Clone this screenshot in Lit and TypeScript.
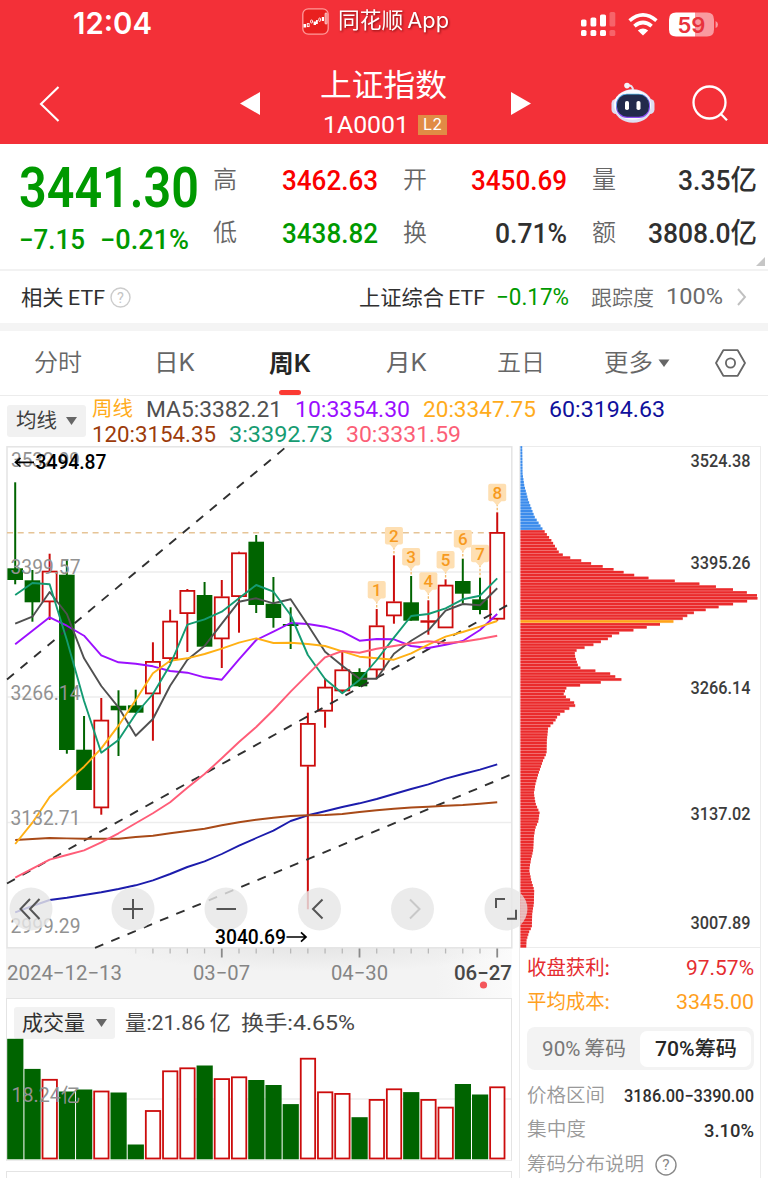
import { LitElement, html, svg, css } from "lit";
import { customElement } from "lit/decorators.js";

/* ---------- chart data (chart pixel space) ---------- */
const STEP = 17.215;
const cx = (i: number) => 15.2 + i * STEP;

// [rising, body top, body bottom, high, low]
const candles: [number, number, number, number, number][] = [
  [0, 568.3, 580, 482.3, 584.3], [0, 580.3, 602.3, 570, 621.7], [1, 571, 602, 553.7, 620],
  [0, 574.7, 750, 559, 753.7], [0, 749.7, 790, 716, 790], [1, 720, 808, 698, 814.7],
  [0, 705.7, 710.3, 690.3, 756], [0, 705.3, 712.7, 689.7, 712.7], [1, 661.3, 694, 642.3, 740.7],
  [1, 621, 658.7, 609.7, 663], [1, 590.3, 613.7, 589, 652], [0, 595, 646.7, 582, 646.7],
  [1, 596.7, 639, 580, 668], [1, 552.7, 596.7, 551.7, 632.7], [0, 541.7, 605, 535, 613],
  [0, 603.7, 618, 577, 627.7], [0, 624, 626, 607.3, 649], [1, 723.3, 766.3, 712.7, 909.3],
  [1, 687, 711.3, 678.3, 727.7], [1, 669.7, 691, 651.7, 692], [0, 672, 686.3, 668.3, 687],
  [1, 625.7, 670, 609, 678], [1, 601.7, 616, 555.3, 623.7], [0, 602.3, 620.7, 576, 620.7],
  [1, 620.6, 622, 600.3, 634.7], [1, 585, 628, 579.3, 628], [0, 581, 593.7, 558.7, 603],
  [0, 599.3, 610, 577.7, 614.3], [1, 532.3, 619.3, 512.3, 620.7],
];

const averages: [string, number[]][] = [
  ["navy", [912.3, 906, 900, 897.7, 895, 892.3, 889, 885.3, 880.3, 874, 867, 861.3, 854, 845.7, 838, 830.7, 821, 815.3, 811.3, 807, 803.3, 799, 794, 789, 784.3, 778.7, 774, 769.7, 764.3]],
  ["brown", [840, 839, 838, 838.4, 838.7, 838.8, 838.7, 837, 835.7, 833.3, 831, 828.7, 825.3, 822.3, 819.7, 817.7, 816, 815.3, 815, 814, 812, 810.3, 808.7, 807.5, 806.7, 805.8, 805, 803.8, 802.3]],
  ["purple", [644.3, 630.7, 617.3, 625.7, 635.7, 655.3, 662.3, 663.7, 666.3, 671, 672.7, 677.3, 679.7, 659.3, 640, 631.7, 623, 624, 626.7, 631.7, 640.7, 639, 639.3, 646, 648, 644.7, 641, 630, 614]],
  ["gray", [623.7, 616.7, 592, 614, 658.3, 686, 707.3, 735.7, 719, 685.7, 659.7, 646, 623.7, 601.7, 598.3, 603.3, 599.3, 625, 651.7, 665.7, 678.7, 678.7, 653.7, 640.7, 630.3, 610.7, 604, 605.3, 588.3]],
  ["amber", [844, 822.7, 797, 781.7, 766.7, 748.3, 725.7, 700, 673.3, 660.7, 658.3, 654, 648.7, 642.7, 638.3, 643, 642.7, 644, 646, 651.3, 656.7, 658.3, 659.7, 653.3, 644.7, 636.7, 632, 626.7, 621]],
  ["green", [595, 583, 584.3, 640, 701, 752.7, 740, 714, 694, 665, 624.7, 619.3, 611.7, 598.3, 585, 591.7, 615, 655, 679, 693.3, 680, 660, 637.7, 616, 614, 608.3, 599.3, 595.7, 578.3]],
  ["pink", [877.7, 868.7, 859.7, 855, 850.3, 842.3, 833.3, 823.3, 813.3, 802.3, 787.7, 774, 758.3, 742, 727, 710, 691.7, 674.3, 657.3, 651, 652.7, 648.7, 646, 643.3, 641.3, 643, 641.7, 639, 635.7]],
];

const tagTops = [581, 527, 548, 572.3, 551, 530, 544.7, 483.7];

const volumes = [
  1039.3, 1069.4, 1079.5, 1092, 1090, 1091.2, 1093, 1145, 1110.7, 1071, 1068, 1066, 1078.8, 1077, 1080.5,
  1085.5, 1104.6, 1058.4, 1092, 1093.6, 1117.7, 1099.6, 1089, 1092.6, 1099.6, 1107.3, 1084.5, 1095, 1087,
];
const volumeRising = new Set([2, 5, 8, 9, 10, 12, 13, 17, 18, 19, 21, 22, 24, 25, 28]);

// chip distribution outline: [y * 3, width * 3]
const chips: [number, number][] = [
  [20, 5], [100, 6], [135, 11], [180, 23], [230, 42], [265, 65], [300, 92], [335, 114], [345, 128], [352, 146],
  [360, 177], [370, 211], [378, 243], [385, 270], [394, 301], [403, 333], [412, 369], [420, 439], [428, 518],
  [436, 566], [445, 614], [452, 661], [461, 692], [470, 724], [479, 698], [488, 660], [495, 621], [505, 574],
  [514, 536], [522, 505], [530, 497], [539, 480], [548, 443], [556, 403], [564, 368], [573, 326], [581, 286],
  [590, 270], [598, 260], [607, 236], [616, 213], [625, 184], [632, 166], [642, 162], [660, 167], [675, 172],
  [684, 180], [692, 224], [701, 270], [710, 285], [718, 304], [727, 240], [736, 176], [743, 138], [765, 128],
  [773, 140], [780, 150], [786, 160], [796, 165], [803, 150], [812, 135], [820, 122], [829, 111], [840, 105],
  [855, 93], [862, 83], [900, 79], [940, 78], [960, 68], [1000, 54], [1030, 45], [1060, 40], [1090, 45],
  [1118, 57], [1145, 53], [1165, 44], [1190, 40], [1230, 38], [1260, 31], [1290, 26], [1320, 32], [1350, 41],
  [1390, 40], [1420, 35], [1460, 34], [1475, 26], [1500, 18], [1522, 17],
];

function chipWidth(v: number): number {
  for (let i = 1; i < chips.length; i++) {
    const [y1, w1] = chips[i];
    if (v <= y1) {
      const [y0, w0] = chips[i - 1];
      return (w0 + ((w1 - w0) * Math.max(0, v - y0)) / (y1 - y0)) / 3;
    }
  }
  return chips[chips.length - 1][1] / 3;
}

/* One line of text set to an exact measure, digits vertically centred in its box. */
const fit = (text: string, width: number, size: number, cls = "din") => html`<svg
  class="fit ${cls}" width=${width} height=${size} viewBox="0 0 ${width} ${size}">
  <text x="0" y=${size * 0.84} font-size=${size} textLength=${width} lengthAdjust="spacingAndGlyphs">${text}</text>
</svg>`;

/* Same thing for use inside a chart: x is the left edge, cy the digit centre. */
const mark = (text: string, x: number, cy: number, width: number, size: number, cls: string) => svg`<text
  class=${cls} x=${x} y=${cy + size * 0.345} font-size=${size} textLength=${width} lengthAdjust="spacingAndGlyphs">${text}</text>`;

const textStyles = css`
  :host { display: block; }
  * { box-sizing: border-box; }
  svg { display: block; flex: none; overflow: visible; }
  .din { font-family: Roboto, "Noto Sans CJK SC", sans-serif; font-weight: 500; }
  .din-r { font-family: Roboto, "Noto Sans CJK SC", sans-serif; font-weight: 400; }
  .din-b { font-family: Roboto, "Noto Sans CJK SC", sans-serif; font-weight: 600; }
  .sans { font-family: Inter, "Noto Sans CJK SC", sans-serif; font-weight: 400; }
  .sans-b { font-family: Inter, "Noto Sans CJK SC", sans-serif; font-weight: 600; }
  .cjk { font-family: "Noto Sans CJK SC", sans-serif; font-weight: 400; }
  .cjk-l { font-family: "Noto Sans CJK SC", sans-serif; font-weight: 350; }
  .cjk-b { font-family: "Noto Sans CJK SC", sans-serif; font-weight: 700; }
  .fit text { fill: currentColor; }
  .row { display: flex; align-items: center; }
`;

@customElement("app-header")
class AppHeader extends LitElement {
  static styles = [textStyles, css`
    :host { height: 144px; background: #f33038; color: #fff; }
    .status { height: 48px; padding-left: 73px; }
    .app { margin-left: 150px; gap: 9px; height: 42px; align-self: flex-start; }
    .app .fit { filter: drop-shadow(1px 1.5px 1px rgba(90, 0, 0, 0.7)); }
    .signal { margin-left: 132px; }
    .wifi { margin-left: 13px; }
    .battery { margin-left: 11px; }
    .nav { height: 96px; padding-left: 39px; }
    .title { width: 127px; margin-left: 60px; display: flex; flex-direction: column; gap: 9px; align-self: stretch; padding-top: 22px; }
    .code { gap: 9px; padding-left: 3px; height: 20px; margin-top: 5px; }
    .level { width: 29px; height: 20px; background: #e18b45; display: grid; place-items: center; }
    .nav > .side { margin-top: 15px; }
    .nav > .prev { margin-left: 180px; }
    .nav > .next { margin-left: 64px; }
    .nav > .robot { margin-left: 80px; margin-top: 13px; }
    .nav > .search { margin-left: 37px; }
  `];
  render() {
    return html`
      <div class="row status">
        ${fit("12:04", 79, 30, "sans-b")}
        <div class="row app">
          <svg width="27" height="27" viewBox="0 0 27 27">
            <rect x="0.8" y="0.8" width="25.4" height="25.4" rx="5.5" fill="#e9201f" stroke="#ff9b9b" stroke-width="1.3" />
            <g fill="#fff"><rect x="1.5" y="16" width="2.6" height="3.5" /><rect x="11.6" y="13.5" width="2.4" height="3.5" /><rect x="14" y="12" width="1.8" height="4" /><rect x="19.8" y="9" width="2.2" height="4" /></g>
            <g fill="none" stroke="#fff" stroke-width="0.9"><rect x="5.3" y="15.6" width="1.8" height="3" /><rect x="8.6" y="12" width="1.9" height="3" rx="0.9" /><rect x="16.8" y="10" width="1.7" height="3.4" rx="0.8" /><rect x="23.2" y="5" width="1.7" height="11" rx="0.8" /></g>
          </svg>
          ${fit("同花顺\u2009App", 111, 22, "sans")}
        </div>
        <svg class="signal" width="34" height="25" viewBox="0 0 34 25" fill="#fff">
          <rect x="0" y="7.5" width="5.5" height="7" rx="1.6" /><rect x="9.5" y="5.5" width="5.8" height="9" rx="1.6" /><rect x="19" y="2.5" width="6" height="12" rx="1.6" />
          <rect x="0" y="18" width="5.5" height="6" rx="1.6" /><rect x="9.5" y="18" width="5.8" height="6" rx="1.6" /><rect x="19" y="18" width="6" height="6" rx="1.6" />
          <g opacity="0.25"><rect x="28.5" y="0" width="5.8" height="14.5" rx="1.6" /><rect x="28.5" y="18" width="5.8" height="6" rx="1.6" /></g>
        </svg>
        <svg class="wifi" width="30" height="23" viewBox="0 0 30 23">
          <g fill="none" stroke="#fff" stroke-width="3.7"><path d="M1.6 7.6 Q15 -4 28.4 7.6" /><path d="M6.4 13.2 Q15 5.8 23.6 13.2" /></g>
          <path d="M9.8 17.6 Q15 13.2 20.2 17.6 L15 22.6 Z" fill="#fff" />
        </svg>
        <svg class="battery" width="49" height="25" viewBox="0 0 49 25">
          <path d="M7 0.5 H26 V24.5 H7 Q0 24.5 0 17.5 V7.5 Q0 0.5 7 0.5 Z" fill="#fff" />
          <path d="M26 0.5 H38 Q45 0.5 45 7.5 V17.5 Q45 24.5 38 24.5 H26 Z M46.6 9 Q49 10 49 12.5 Q49 15 46.6 16 Z" fill="#f99aa0" />
          <text class="sans-b" x="8.5" y="20.6" font-size="22" textLength="28" lengthAdjust="spacingAndGlyphs" fill="#e8323c">59</text>
        </svg>
      </div>
      <div class="row nav">
        <svg class="side" width="21" height="36" viewBox="0 0 21 36"><path d="M19.5 1 L2 18 L19.5 35" fill="none" stroke="#fff" stroke-width="2.1" /></svg>
        <svg class="side prev" width="20" height="23" viewBox="0 0 20 23"><path d="M20 0 V23 L0 11.5 Z" fill="#fff" /></svg>
        <div class="title">
          ${fit("上证指数", 127, 31, "cjk")}
          <div class="row code">
            ${fit("1A0001", 86, 24, "din-r")}
            <span class="level">${fit("L2", 19, 16, "sans")}</span>
          </div>
        </div>
        <svg class="side next" width="20" height="23" viewBox="0 0 20 23"><path d="M0 0 V23 L20 11.5 Z" fill="#fff" /></svg>
        <svg class="side robot" width="44" height="42" viewBox="0 0 44 42">
          <path d="M16 4 Q22 2 22 9" fill="none" stroke="#e6e6f4" stroke-width="2" /><circle cx="16" cy="3.6" r="2.8" fill="#f4f4fb" />
          <rect x="0.5" y="17" width="10" height="15" rx="4.5" fill="#dcdcf0" /><rect x="33.5" y="17" width="10" height="15" rx="4.5" fill="#dcdcf0" />
          <ellipse cx="22" cy="24" rx="19.5" ry="16.8" fill="#dedff2" /><ellipse cx="21.5" cy="22.8" rx="18.5" ry="15" fill="#fafaff" />
          <rect x="5" y="12" width="34" height="24" rx="11" fill="#8b4df0" /><rect x="5.2" y="11.8" width="33" height="22" rx="10.5" fill="#56b9e8" />
          <rect x="6" y="12.6" width="32" height="22.2" rx="10" fill="#222a4c" />
          <rect x="14" y="19" width="4" height="9" rx="1.8" fill="#fff" /><rect x="25.5" y="19" width="4" height="9" rx="1.8" fill="#fff" />
        </svg>
        <svg class="side search" width="37" height="37" viewBox="0 0 37 37" fill="none" stroke="#fff" stroke-width="2.3"><circle cx="17.5" cy="17.5" r="16" /><path d="M28.6 28.8 L35 35.2" /></svg>
      </div>`;
  }
}

@customElement("quote-panel")
class QuotePanel extends LitElement {
  static styles = [textStyles, css`
    .quote { height: 127px; padding: 9px 11px 0 20px; border-bottom: 2px solid #f2f2f2; display: grid; grid-template-columns: 193px 165px 25px 164px 25px 165px; position: relative; }
    .last { color: #009900; display: flex; flex-direction: column; }
    .big { height: 70px; margin-left: -1px; }
    .change { gap: 15px; height: 32px; margin-left: -1px; }
    .stats { display: grid; grid-template-rows: 53px 53px; }
    .pair { justify-content: space-between; color: #303030; }
    .label { color: #666; }
    .up { color: #fa0000; }
    .down { color: #009900; }
    .corner { position: absolute; right: 3px; bottom: 3px; }
    .etf { height: 52px; padding-left: 21px; color: #303030; }
    .help { margin-left: 5px; }
    .fund { margin-left: 228px; gap: 11px; }
    .track { margin-left: 22px; gap: 12px; color: #6a6a6a; }
    .arrow { margin-left: 14px; }
    .band { height: 8px; background: #f4f4f4; }
  `];
  pair(label: string, value: string, width: number, cls = "") {
    return html`<div class="row pair"><span class="label">${fit(label, 24, 24, "cjk-l")}</span><span class=${cls}>${fit(value, width, 28)}</span></div>`;
  }
  render() {
    return html`
      <div class="quote">
        <div class="last">
          <div class="row big">${fit("3441.30", 180, 55, "din-b")}</div>
          <div class="row change">${fit("−7.15", 66, 27)}${fit("−0.21%", 89, 27)}</div>
        </div>
        <div class="stats">${this.pair("高", "3462.63", 96, "up")}${this.pair("低", "3438.82", 96, "down")}</div>
        <span></span>
        <div class="stats">${this.pair("开", "3450.69", 96, "up")}${this.pair("换", "0.71%", 72)}</div>
        <span></span>
        <div class="stats">${this.pair("量", "3.35亿", 79)}${this.pair("额", "3808.0亿", 109)}</div>
        <svg class="corner" width="9" height="9"><path d="M9 0 V9 H0 Z" fill="#c6c6c6" /></svg>
      </div>
      <div class="row etf">
        ${fit("相关\u2009ETF", 84, 21, "din-r")}
        <svg class="help" width="21" height="21" viewBox="0 0 21 21"><circle cx="10.5" cy="10.5" r="9.5" fill="none" stroke="#ccc" stroke-width="1.4" /><text class="din-r" x="10.5" y="15.6" font-size="14.5" text-anchor="middle" fill="#c4c4c4">?</text></svg>
        <div class="row fund">${fit("上证综合\u2009ETF", 126, 21, "din-r")}<span class="down">${fit("−0.17%", 73, 23, "din-r")}</span></div>
        <div class="row track">${fit("跟踪度", 63, 21, "cjk-l")}${fit("100%", 57, 22, "din-r")}</div>
        <svg class="arrow" width="9" height="18" viewBox="0 0 9 18"><path d="M1 1 L8 9 L1 17" fill="none" stroke="#c0c0c0" stroke-width="1.9" /></svg>
      </div>
      <div class="band"></div>`;
  }
}

@customElement("period-tabs")
class PeriodTabs extends LitElement {
  static styles = [textStyles, css`
    .tabs { height: 65px; padding-left: 34px; color: #666; border-bottom: 1px solid #ececec; }
    .day { margin-left: 72px; }
    .week { margin-left: 74px; height: 100%; display: flex; flex-direction: column; align-items: center; justify-content: space-between; padding-top: 21px; color: #262626; }
    .bar { width: 22px; height: 5px; border-radius: 3px; background: #fb3a33; }
    .month { margin-left: 75px; }
    .five { margin-left: 70px; }
    .more { margin-left: 59px; gap: 5px; }
    .gear { margin-left: 45px; }
  `];
  render() {
    return html`<div class="row tabs">
      ${fit("分时", 48, 24, "cjk-l")}
      <span class="day">${fit("日K", 41, 24, "sans")}</span>
      <span class="week">${fit("周K", 42, 24, "sans-b")}<i class="bar"></i></span>
      <span class="month">${fit("月K", 41, 24, "sans")}</span>
      <span class="five">${fit("五日", 48, 24, "cjk-l")}</span>
      <span class="row more">${fit("更多", 49, 24, "cjk-l")}<svg width="12" height="8"><path d="M0.5 0.5 H11.5 L6 8 Z" fill="#666" /></svg></span>
      <svg class="gear" width="31" height="28" viewBox="0 0 31 28" fill="none" stroke="#666" stroke-width="1.8"><path d="M8.3 1.2 H22.7 L30 14 L22.7 26.8 H8.3 L1 14 Z" stroke-linejoin="round" /><circle cx="15.5" cy="14" r="4.6" /></svg>
    </div>`;
  }
}

@customElement("kline-chart")
class KlineChart extends LitElement {
  static styles = [textStyles, css`
    :host { width: 513px; flex: none; }
    .thin { fill: none; stroke-width: 1.9; stroke-linejoin: round; }
    .navy { stroke: #1c1cac; } .brown { stroke: #a84a18; } .purple { stroke: #9c10ff; }
    .gray { stroke: #505050; } .amber { stroke: #ffb014; } .green { stroke: #149b72; } .pink { stroke: #ff5d78; }
    .grid { stroke: #ededed; stroke-width: 1.3; }
    .frame { fill: none; stroke: #e4e4e4; stroke-width: 1.5; }
    .trend { fill: none; stroke: #303030; stroke-width: 1.9; stroke-dasharray: 9 8.6; }
    .t1 { stroke-dashoffset: -1; stroke-dasharray: 9 17.3; stroke-dasharray: 9 17.8; }
    .last { stroke: #e6c496; stroke-width: 1.5; stroke-dasharray: 6 4.7; }
    .scale { fill: #929292; }
    .extreme { fill: #000; }
    .date { fill: #858585; }
    .now { fill: #484848; }
    .tag { fill: #fedfb2; }
    .tagno { fill: #f79a1e; text-anchor: middle; }
    .up { fill: #fff; stroke: #cc0c0c; stroke-width: 1.8; }
    .upline { stroke: #cc0c0c; stroke-width: 2; }
    .down { fill: #006400; }
    .downline { stroke: #006400; stroke-width: 2; }
    .knob { fill: #e6e6e6; opacity: 0.82; }
    .glyph { fill: none; stroke: #555; stroke-width: 2; }
    .faint { stroke: #c8c8c8; }
  `];

  candle(c: [number, number, number, number, number], i: number) {
    const [rise, top, bottom, high, low] = c;
    const x = cx(i);
    if (!rise) {
      return svg`<line class="downline" x1=${x} x2=${x} y1=${high} y2=${low} /><rect class="down" x=${x - 7.8} y=${top} width="15.6" height=${bottom - top} />`;
    }
    return svg`<line class="upline" x1=${x} x2=${x} y1=${high} y2=${top} /><line class="upline" x1=${x} x2=${x} y1=${bottom} y2=${low} />
      <rect class="up" x=${x - 7} y=${top + 0.6} width="14" height=${Math.max(0.6, bottom - top - 1.2)} />`;
  }

  tag(top: number, n: number) {
    const i = 21 + n;
    const x = cx(i);
    return svg`<line x1=${x} x2=${x} y1=${top + 20} y2=${candles[i][3]} stroke="#f3b765" stroke-width="1.3" stroke-dasharray="2.5 1.5" />
      <rect class="tag" x=${x - 9} y=${top} width="18" height="17.5" rx="2" /><path class="tag" d="M${x - 4.5} ${top + 17} h9 l-4.5 5 Z" />
      <text class="tagno din" x=${x} y=${top + 15} font-size="17">${n + 1}</text>`;
  }

  render() {
    return html`<svg width="513" height="552" viewBox="0 446 513 552">
      <defs>
        <linearGradient id="axis" x1="0" x2="1"><stop offset="0" stop-color="#f3f3f3" /><stop offset="0.85" stop-color="#f3f3f3" /><stop offset="1" stop-color="#fbfbfb" /></linearGradient>
        <radialGradient id="shade" cx="0.5" cy="0" r="0.5" gradientTransform="translate(0 0) scale(1 2)"><stop offset="0" stop-color="#e6e6e6" /><stop offset="1" stop-color="#e6e6e6" stop-opacity="0" /></radialGradient>
      </defs>
      <rect x="6" y="948" width="506" height="50" fill="url(#axis)" />
      <rect x="120" y="948" width="392" height="24" fill="url(#shade)" />
      ${[572, 697, 822.5].map((y) => svg`<line class="grid" x1="7" x2="512" y1=${y} y2=${y} />`)}
      <rect class="frame" x="7" y="446.8" width="504.8" height="501" />
      <line class="last" x1="7" x2="506" y1="532.7" y2="532.7" />
      ${candles.map((c, i) => this.candle(c, i))}
      <path class="trend" d="M7 679.5 L286 447" /><path class="trend" d="M7 883.5 L512 602.7" /><path class="trend" d="M95 947.8 L512 774.2" />
      ${averages.map(([name, ys]) => svg`<polyline class="thin ${name}" points=${ys.map((y, i) => `${cx(i)},${y}`).join(" ")} />`)}
      ${tagTops.map((t, n) => this.tag(t, n))}
      ${mark("3532.99", 11, 460.5, 69, 19.5, "scale din-r")}
      ${mark("3399.57", 10.5, 567.5, 70, 20, "scale din-r")}
      ${mark("3266.14", 10.5, 693.3, 70, 20, "scale din-r")}
      ${mark("3132.71", 10.5, 818.5, 70, 20, "scale din-r")}
      ${mark("2999.29", 10.5, 926.5, 70, 20, "scale din-r")}
      <path d="M34 462.3 H15.5 M20.5 458 L15.5 462.3 L20.5 466.6" fill="none" stroke="#000" stroke-width="1.7" />
      ${mark("3494.87", 35.5, 462, 71, 20, "extreme din")}
      ${[31, 133, 226, 319.5, 412.5, 506].map((x) => svg`<circle class="knob" cx=${x} cy="909" r="21.5" />`)}
      <path class="glyph" d="M30 899 L20.5 909 L30 919 M39.5 899 L30 909 L39.5 919" />
      <path class="glyph" d="M123 909 H143 M133 899 V919" /><path class="glyph" d="M216.5 909 H236" />
      <path class="glyph" d="M322.5 899.5 L313 909 L322.5 918.5" /><path class="glyph faint" d="M410 899.5 L419.5 909 L410 918.5" />
      <path class="glyph" d="M496 908 V899 H505 M507 918.8 H516 V909.8" />
      ${mark("3040.69", 215, 937, 71, 20, "extreme din")}
      <path d="M286.5 937 H306 M301 932.4 L306 937 L301 941.6" fill="none" stroke="#000" stroke-width="1.7" />
      ${Array.from({ length: 22 }, (_, k) => k + 7).map((i) => {
        const major = i % 8 === 4;
        return svg`<line x1=${cx(i)} x2=${cx(i)} y1="948.5" y2=${major ? 957.5 : 953.5} stroke=${major ? "#8a8a8a" : i === 7 ? "#dedede" : "#b8b8b8"} stroke-width=${major ? 1.8 : 1.3} />`;
      })}
      ${mark("2024−12−13", 7, 972.5, 115, 20.5, "date din-r")}
      ${mark("03−07", 193, 972.5, 57, 20.5, "date din-r")}
      ${mark("04−30", 331, 972.5, 57, 20.5, "date din-r")}
      ${mark("06−27", 454, 972.5, 58, 20.5, "now din")}
      <circle cx="483.5" cy="985" r="3.6" fill="#f4565c" />
    </svg>`;
  }
}

@customElement("volume-chart")
class VolumeChart extends LitElement {
  static styles = [textStyles, css`
    :host { width: 506px; height: 163px; margin-left: 6px; border: 1.5px solid #e4e4e4; border-bottom-color: #ececec; }
    .head { height: 40px; padding: 7px 0 0 7px; color: #484848; }
    .pick { width: 101px; height: 32px; background: #f2f2f2; border-radius: 3px; padding: 0 8px; justify-content: space-between; color: #303030; }
    .vol { margin-left: 10px; }
    .turn { margin-left: 10px; }
    .up { fill: #fff; stroke: #cc0c0c; stroke-width: 1.8; }
    .down { fill: #006400; }
    .scale { fill: #929292; }
  `];
  render() {
    return html`
      <div class="row head">
        <div class="row pick">${fit("成交量", 63, 21, "cjk")}<svg width="11" height="8"><path d="M0 0 H11 L5.5 8 Z" fill="#666" /></svg></div>
        <span class="vol">${fit("量:21.86\u2009亿", 106, 21, "din-r")}</span><span class="turn">${fit("换手:4.65%", 114, 21, "din-r")}</span>
      </div>
      <svg width="504" height="121" viewBox="7 1039.5 504 121">
        <line x1="7" x2="511" y1="1099.5" y2="1099.5" stroke="#ececec" stroke-width="1.3" />
        ${volumes.map((y, i) => volumeRising.has(i)
          ? svg`<rect class="up" x=${cx(i) - 7.1} y=${y + 0.8} width="14.4" height=${1158.2 - y} />`
          : svg`<rect class="down" x=${cx(i) - 8} y=${y} width="16.2" height=${1159.8 - y} />`)}
        ${mark("18.24亿", 11.5, 1095.5, 69, 19.5, "scale din-r")}
      </svg>`;
  }
}

@customElement("chip-panel")
class ChipPanel extends LitElement {
  static styles = [textStyles, css`
    :host { width: 242px; height: 732px; margin-left: 6px; border: 1.3px solid #ececec; border-bottom: 0; flex: none; }
    .plot { border-bottom: 1px solid #ececec; height: 501px; }
    .red { fill: #ea2b2c; } .blue { fill: #3c8cec; } .gold { fill: #ffa31a; }
    .soft { opacity: 0.45; }
    .price { fill: #3c3c3c; }
    .info { padding: 3px 6px 0 7px; display: flex; flex-direction: column; }
    .line { height: 34px; justify-content: space-between; color: #2f2f2f; }
    .gain { color: #e52c30; }
    .cost { color: #ffa01e; }
    .toggle { height: 43px; margin: 8px 0 9px; background: #f3f3f3; border-radius: 8px; padding: 0 3px 0 15px; justify-content: space-between; color: #777; }
    .on { width: 111px; height: 36px; background: #fff; border-radius: 7px; display: grid; place-items: center; color: #262626; }
    .muted { color: #999; }
    .note { height: 36px; gap: 11px; color: #999; }
  `];
  render() {
    const pitch = 2.9;
    const bars = Array.from({ length: 173 }, (_, k) => {
      const y = 446.2 + k * pitch;
      const v = (y + 1.2 - 440) * 3;
      const gold = Math.abs(v - 548) < 4.4;
      const cls = gold ? "gold" : y < 528.5 ? "blue" : "red";
      return svg`<rect class="${cls} soft" x="520.5" y=${y} width=${chipWidth(v)} height="2.9" /><rect class=${cls} x="520.5" y=${y} width=${chipWidth(v)} height="2.4" />`;
    });
    const prices: [string, number][] = [["3524.38", 460.5], ["3395.26", 562.5], ["3266.14", 688], ["3137.02", 813.5], ["3007.89", 923]];
    return html`
      <div class="plot"><svg width="240" height="501" viewBox="520 447 240 501">${bars}
        <path d="M520.3 893 A21.5 21.5 0 0 1 520.3 925 Z" fill="#e6e6e6" opacity="0.75" />
        ${prices.map(([p, y]) => mark(p, 690.5, y, 60, 18.5, "price din"))}
      </svg></div>
      <div class="info">
        <div class="row line gain">${fit("收盘获利:", 83, 20, "cjk")}${fit("97.57%", 68, 20, "din-r")}</div>
        <div class="row line cost">${fit("平均成本:", 83, 20, "cjk")}${fit("3345.00", 78, 20, "din-r")}</div>
        <div class="row toggle">${fit("90%\u2009筹码", 84, 20, "din-r")}<span class="on">${fit("70%筹码", 82, 20, "din")}</span></div>
        <div class="row line"><span class="muted">${fit("价格区间", 78, 19.5, "cjk-l")}</span>${fit("3186.00−3390.00", 130, 18)}</div>
        <div class="row line"><span class="muted">${fit("集中度", 59, 19.5, "cjk-l")}</span>${fit("3.10%", 50, 18.5)}</div>
        <div class="row note">${fit("筹码分布说明", 117, 19.5, "cjk-l")}<svg width="22" height="22" viewBox="0 0 22 22"><circle cx="11" cy="11" r="10" fill="none" stroke="#888" stroke-width="1.4" /><text class="din-r" x="11" y="16.4" font-size="15.5" text-anchor="middle" fill="#888">?</text></svg></div>
      </div>`;
  }
}

@customElement("app-root")
class AppRoot extends LitElement {
  static styles = [textStyles, css`
    :host { width: 768px; height: 1178px; overflow: hidden; background: #fff; }
    .legend { height: 50px; padding-left: 7px; gap: 6px; align-items: flex-start; }
    .pick { width: 79px; height: 32px; margin-top: 9px; background: #f1f1f1; border-radius: 3px; padding: 0 9px; justify-content: space-between; color: #404040; }
    .lines { display: flex; flex-direction: column; padding-top: 1px; }
    .line { height: 25px; gap: 13px; }
    .amber { color: #ffac1c; } .gray { color: #505050; } .purple { color: #9a0eff; } .navy { color: #10109c; }
    .brown { color: #9c3b0a; } .green { color: #179c72; } .pink { color: #fb5f77; }
    .main { display: flex; height: 732px; align-items: flex-start; }
    .left { width: 513px; flex: none; }
    .below { height: 20px; width: 506px; margin: 10px 0 0 6px; border: 1.5px solid #e4e4e4; }
  `];
  render() {
    return html`
      <app-header></app-header>
      <quote-panel></quote-panel>
      <period-tabs></period-tabs>
      <div class="row legend">
        <div class="row pick">${fit("均线", 41, 20.5, "cjk")}<svg width="11" height="8"><path d="M0 0 H11 L5.5 8 Z" fill="#666" /></svg></div>
        <div class="lines">
          <div class="row line">
            <span class="amber">${fit("周线", 41, 20.5, "cjk")}</span>
            <span class="gray">${fit("MA5:3382.21", 136, 22, "din-r")}</span>
            <span class="purple">${fit("10:3354.30", 115, 22, "din-r")}</span>
            <span class="amber">${fit("20:3347.75", 113, 22, "din-r")}</span>
            <span class="navy">${fit("60:3194.63", 116, 22, "din-r")}</span>
          </div>
          <div class="row line">
            <span class="brown">${fit("120:3154.35", 124, 22, "din-r")}</span>
            <span class="green">${fit("3:3392.73", 104, 22, "din-r")}</span>
            <span class="pink">${fit("30:3331.59", 115, 22, "din-r")}</span>
          </div>
        </div>
      </div>
      <div class="main">
        <div class="left"><kline-chart></kline-chart><volume-chart></volume-chart><div class="below"></div></div>
        <chip-panel></chip-panel>
      </div>`;
  }
}
